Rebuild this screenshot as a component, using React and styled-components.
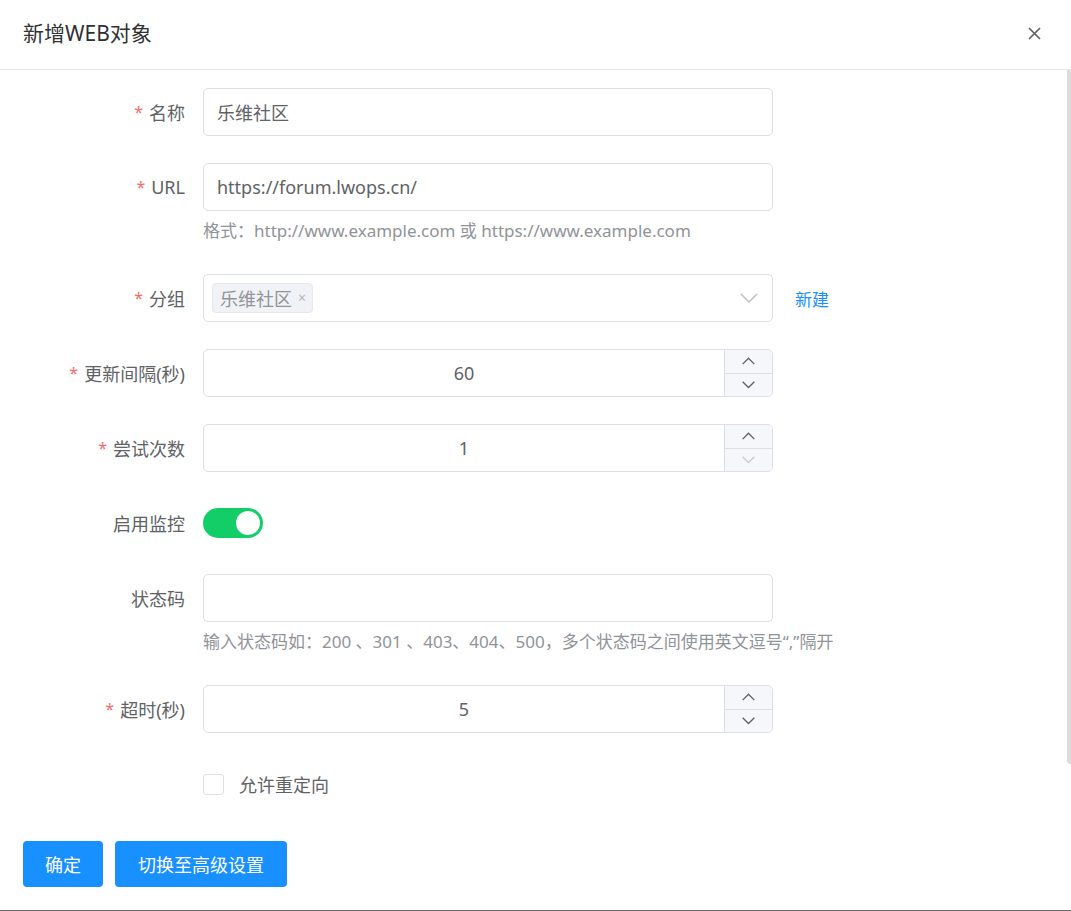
import React, { useState } from 'react';
import styled, { createGlobalStyle } from 'styled-components';

const GlobalStyle = createGlobalStyle`
  html, body {
    margin: 0;
    padding: 0;
    background: #fff;
  }
  body {
    font-family: "Noto Sans", "Noto Sans CJK SC", sans-serif;
  }
  * {
    box-sizing: border-box;
  }
`;

const Dialog = styled.div`
  position: relative;
  width: 1071px;
  height: 911px;
  background: #fff;
  border-bottom: 1px solid #6b6b6b;
  overflow: hidden;
`;

const Header = styled.div`
  height: 70px;
  display: flex;
  align-items: center;
  justify-content: space-between;
  padding: 0 26px 0 23px;
  border-bottom: 1px solid #e4e7ed;
`;

const Title = styled.div`
  font-size: 21px;
  color: #303133;
  line-height: 1;
  margin-top: -2px;
`;

const CloseButton = styled.button`
  border: none;
  background: none;
  padding: 0;
  width: 22px;
  height: 22px;
  display: flex;
  align-items: center;
  justify-content: center;
  color: #606266;
  cursor: pointer;
  margin-top: -2px;
`;

const ScrollThumb = styled.div`
  position: absolute;
  right: 0;
  top: 70px;
  width: 4px;
  height: 694px;
  background: #dcdcdc;
  border-radius: 0 0 0 3px;
`;

const Body = styled.div`
  padding: 18px 23px 0;
`;

const Item = styled.div`
  display: flex;
  margin-bottom: ${p => (p.$help ? '31px' : '27px')};
`;

const Label = styled.label`
  width: 180px;
  flex-shrink: 0;
  padding-right: 18px;
  height: 48px;
  display: flex;
  align-items: center;
  justify-content: flex-end;
  font-size: 18px;
  color: #606266;
`;

const Star = styled.span`
  color: #f56c6c;
  margin-right: 6px;
  font-size: 16px;
`;

const Field = styled.div`
  display: flex;
  flex-direction: column;
`;

const FieldRow = styled.div`
  display: flex;
  align-items: center;
  gap: 22px;
`;

const TextInput = styled.input`
  width: 570px;
  height: 48px;
  border: 1px solid #dcdfe6;
  border-radius: 5px;
  padding: 0 13px;
  font-family: inherit;
  font-size: 18px;
  color: #606266;
  outline: none;
  background: #fff;
`;

const Help = styled.div`
  margin-top: 8px;
  line-height: 24px;
  font-size: 17px;
  color: #909399;
  white-space: nowrap;
`;

const SelectBox = styled.div`
  width: 570px;
  height: 48px;
  border: 1px solid #dcdfe6;
  border-radius: 5px;
  display: flex;
  align-items: center;
  justify-content: space-between;
  padding: 0 14px 0 8px;
`;

const Tag = styled.span`
  display: inline-flex;
  align-items: center;
  height: 30px;
  padding: 0 6px 0 7px;
  gap: 6px;
  background: #f0f2f5;
  border: 1px solid #e9e9eb;
  border-radius: 4px;
  font-size: 18px;
  color: #909399;
`;

const TagClose = styled.span`
  font-size: 14px;
  color: #b4b7bd;
  line-height: 1;
`;

const Link = styled.a`
  font-size: 17px;
  color: #1890ff;
  cursor: pointer;
`;

const NumberBox = styled.div`
  width: 570px;
  height: 48px;
  border: 1px solid #dcdfe6;
  border-radius: 5px;
  display: flex;
  overflow: hidden;
`;

const NumberValue = styled.div`
  flex: 1;
  display: flex;
  align-items: center;
  justify-content: center;
  font-size: 18px;
  color: #606266;
`;

const Steps = styled.div`
  width: 48px;
  display: flex;
  flex-direction: column;
  border-left: 1px solid #dcdfe6;
  background: #f5f7fa;
`;

const Step = styled.div`
  flex: 1;
  display: flex;
  align-items: center;
  justify-content: center;
  color: ${p => (p.$disabled ? '#c8cbd1' : '#606266')};
  & + & {
    border-top: 1px solid #dcdfe6;
  }
`;

const SwitchTrack = styled.div`
  width: 60px;
  height: 30px;
  margin-top: 9px;
  border-radius: 15px;
  background: ${p => (p.$on ? '#13ce66' : '#dcdfe6')};
  position: relative;
  cursor: pointer;
`;

const SwitchKnob = styled.span`
  position: absolute;
  top: 3px;
  left: ${p => (p.$on ? '33px' : '3px')};
  width: 24px;
  height: 24px;
  border-radius: 50%;
  background: #fff;
`;

const CheckRow = styled.label`
  height: 48px;
  display: flex;
  align-items: center;
  gap: 15px;
  font-size: 18px;
  color: #606266;
  cursor: pointer;
`;

const CheckBox = styled.span`
  width: 21px;
  height: 21px;
  border: 1px solid #dcdfe6;
  border-radius: 3px;
  background: #fff;
`;

const Footer = styled.div`
  display: flex;
  gap: 12px;
  padding: 6px 23px 0;
`;

const Button = styled.button`
  height: 46px;
  padding: 0 ${p => (p.$wide ? '23px' : '22px')};
  border: none;
  border-radius: 4px;
  background: #1890ff;
  color: #fff;
  font-family: inherit;
  font-size: 18px;
  cursor: pointer;
`;

const Chevron = ({ up, size = 12, color = 'currentColor', width = 1.3 }) => (
  <svg width={size} height={size * 0.6} viewBox="0 0 20 12" fill="none">
    <path
      d={up ? 'M1 11 L10 2 L19 11' : 'M1 1 L10 10 L19 1'}
      stroke={color}
      strokeWidth={width * 1.6}
    />
  </svg>
);

const NumberInput = ({ value, min }) => (
  <NumberBox>
    <NumberValue>{value}</NumberValue>
    <Steps>
      <Step><Chevron up size={13} /></Step>
      <Step $disabled={min !== undefined && value <= min}><Chevron size={13} /></Step>
    </Steps>
  </NumberBox>
);

const App = () => {
  const [on, setOn] = useState(true);

  return (
    <>
      <GlobalStyle />
      <Dialog>
        <Header>
          <Title>新增WEB对象</Title>
          <CloseButton aria-label="close">
            <svg width="13" height="13" viewBox="0 0 13 13">
              <path d="M1 1 L12 12 M12 1 L1 12" stroke="#5f6266" strokeWidth="1.7" />
            </svg>
          </CloseButton>
        </Header>
        <ScrollThumb />
        <Body>
          <Item>
            <Label><Star>*</Star>名称</Label>
            <TextInput defaultValue="乐维社区" />
          </Item>
          <Item $help>
            <Label><Star>*</Star>URL</Label>
            <Field>
              <TextInput defaultValue="https://forum.lwops.cn/" />
              <Help>格式：http://www.example.com 或 https://www.example.com</Help>
            </Field>
          </Item>
          <Item>
            <Label><Star>*</Star>分组</Label>
            <FieldRow>
              <SelectBox>
                <Tag>乐维社区<TagClose>×</TagClose></Tag>
                <Chevron size={18} color="#c0c4cc" width={1.1} />
              </SelectBox>
              <Link>新建</Link>
            </FieldRow>
          </Item>
          <Item>
            <Label><Star>*</Star>更新间隔(秒)</Label>
            <NumberInput value={60} min={1} />
          </Item>
          <Item>
            <Label><Star>*</Star>尝试次数</Label>
            <NumberInput value={1} min={1} />
          </Item>
          <Item>
            <Label>启用监控</Label>
            <SwitchTrack $on={on} onClick={() => setOn(!on)}>
              <SwitchKnob $on={on} />
            </SwitchTrack>
          </Item>
          <Item $help>
            <Label>状态码</Label>
            <Field>
              <TextInput />
              <Help>输入状态码如：200 、301 、403、404、500，多个状态码之间使用英文逗号“,”隔开</Help>
            </Field>
          </Item>
          <Item>
            <Label><Star>*</Star>超时(秒)</Label>
            <NumberInput value={5} min={1} />
          </Item>
          <Item>
            <Label />
            <CheckRow>
              <CheckBox />
              允许重定向
            </CheckRow>
          </Item>
        </Body>
        <Footer>
          <Button>确定</Button>
          <Button $wide>切换至高级设置</Button>
        </Footer>
      </Dialog>
    </>
  );
};

export default App;
